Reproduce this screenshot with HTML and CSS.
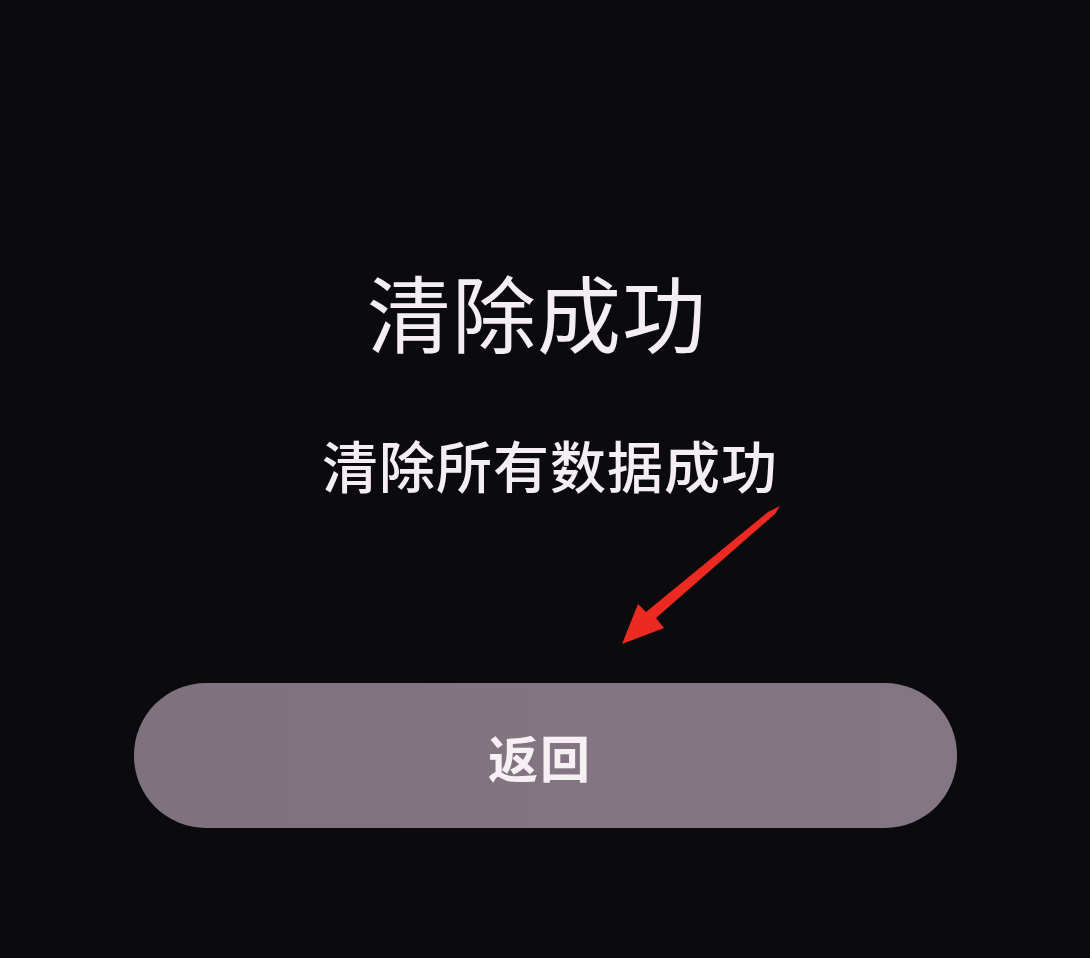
FILE: index.html
```html
<!DOCTYPE html>
<html lang="zh-CN">
<head>
<meta charset="utf-8">
<link rel="stylesheet" href="styles.css">
</head>
<body>
<main class="screen">
  <h1 class="title">清除成功</h1>
  <p class="subtitle">清除所有数据成功</p>
  <svg class="arrow" width="200" height="160" viewBox="0 0 200 160">
    <path d="M180 6 L175 14 L56 118 L64 128 L22 144 L38 104 L46 112 L168 12 Z" fill="#ec2a22"/>
  </svg>
  <button class="back">返回</button>
</main>
</body>
</html>
```
FILE: styles.css
```css
html, body {
  margin: 0;
  padding: 0;
  background: #0b0b0e;
  height: 100%;
}
.screen {
  position: relative;
  width: 1090px;
  height: 958px;
  display: flex;
  flex-direction: column;
  align-items: center;
  font-family: "Noto Sans CJK SC", "Noto Sans", sans-serif;
  color: #f4eef4;
  overflow: hidden;
}
.title {
  margin: 261px 16px 0 0;
  font-size: 84px;
  line-height: 100px;
  font-weight: 400;
  letter-spacing: 1px;
}
.subtitle {
  margin: 68px 0 0 10px;
  font-size: 56px;
  line-height: 70px;
  font-weight: 500;
  letter-spacing: 1px;
}
.arrow {
  position: absolute;
  left: 600px;
  top: 500px;
}
.back {
  margin-top: 184px;
  width: 823px;
  height: 145px;
  border: none;
  border-radius: 72px;
  background: linear-gradient(90deg, #7f727e, #857684);
  color: #f6f0f4;
  font-family: "Noto Sans CJK SC", "Noto Sans", sans-serif;
  font-size: 50px;
  font-weight: 700;
  letter-spacing: 2px;
  padding: 0 10px 0 0;
}
```
